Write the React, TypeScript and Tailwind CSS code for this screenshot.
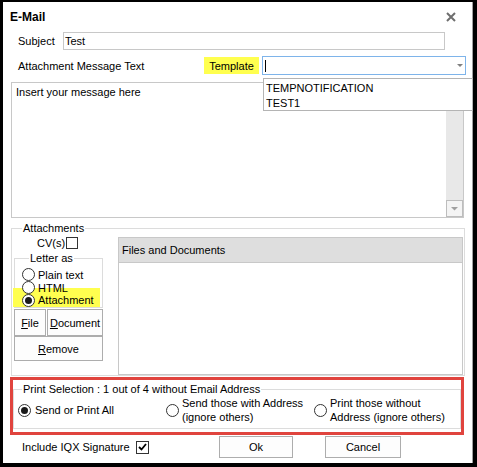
import React from "react";

function Radio({ checked }: { checked?: boolean }) {
  return (
    <span className="w-[13px] h-[13px] rounded-full border border-[#333333] bg-white flex items-center justify-center shrink-0">
      {checked && <span className="w-[7px] h-[7px] rounded-full bg-[#1a1a1a]" />}
    </span>
  );
}

function Btn({ className, children }: { className: string; children: React.ReactNode }) {
  return (
    <div
      className={
        "flex items-center justify-center border border-[#adadad] bg-[#fdfdfd] " + className
      }
    >
      {children}
    </div>
  );
}

export default function App() {
  return (
    <div className="w-[477px] h-[467px] bg-black pt-[2px] pl-[3px] font-['Liberation_Sans',Arial,sans-serif] text-[11px] leading-[14px] text-black">
      <div className="w-[470px] h-[461px] bg-white border-r border-[#a0a0a0] flex flex-col">
        {/* title bar */}
        <div className="h-[28px] pt-[2px] pl-[7px] pr-[16px] flex items-center justify-between">
          <span className="text-[12px] font-bold">E-Mail</span>
          <svg width="10" height="10" viewBox="0 0 10 10">
            <path d="M1 1L9 9M9 1L1 9" stroke="#6e6e6e" strokeWidth="2" />
          </svg>
        </div>

        {/* subject */}
        <div className="mt-[2px] h-[18px] pl-[15px] flex items-center">
          <span className="w-[45px]">Subject</span>
          <div className="w-[382px] h-[18px] border border-[#c8c8c8] pl-[1px] flex items-center">
            Test
          </div>
        </div>

        {/* attachment message / template */}
        <div className="mt-[6px] h-[19px] pl-[15px] flex items-center">
          <span className="w-[186px]">Attachment Message Text</span>
          <span className="w-[55px] h-[17px] bg-[#ffff4f] flex items-center justify-center">
            Template
          </span>
          <div className="relative ml-[3px] w-[204px] h-[19px] border border-[#7eb4ea] flex items-center justify-between pl-[2px] pr-[2px]">
            <span className="w-[1px] h-[12px] bg-black" />
            <svg width="6" height="4" viewBox="0 0 6 4">
              <path d="M0 0H6L3 3Z" fill="#808080" />
            </svg>
            <div className="absolute z-10 top-[21px] left-[0px] w-[210px] h-[33px] border border-[#b4b4b4] bg-white pt-[1px] pl-[2px]">
              <div className="h-[16px] flex items-center">TEMPNOTIFICATION</div>
              <div className="h-[14px] flex items-center">TEST1</div>
            </div>
          </div>
        </div>

        {/* message */}
        <div className="mt-[7px] ml-[8px] w-[453px] h-[136px] border border-[#c8c8c8] flex">
          <div className="flex-1 pl-[4px] pt-[2px]">Insert your message here</div>
          <div className="w-[17px] bg-[#e8e8e8] flex flex-col justify-end">
            <div className="h-[17px] border border-[#bdbdbd] bg-[#f4f4f4] flex items-center justify-center">
              <svg width="7" height="4" viewBox="0 0 7 4">
                <path d="M0 0H7L3.5 3.5Z" fill="#a0a0a0" />
              </svg>
            </div>
          </div>
        </div>

        {/* attachments group */}
        <div className="relative mt-[10px] ml-[8px] w-[454px] h-[148px] border border-[#dcdcdc] flex">
          <span className="absolute -top-[8px] left-[10px] bg-white px-[1px]">Attachments</span>

          <div className="w-[104px] pl-[2px] flex flex-col">
            <div className="mt-[8px] h-[12px] pl-[23px] flex items-center">
              <span>CV(s)</span>
              <span className="ml-[1px] w-[12px] h-[12px] border border-[#333333] bg-white" />
            </div>

            <div className="relative mt-[9px] w-[89px] h-[50px] border border-[#dcdcdc] pt-[9px]">
              <span className="absolute -top-[8px] left-[14px] bg-white px-[1px]">Letter as</span>
              <div className="h-[13px] pl-[7px] flex items-center gap-[3px]">
                <Radio />
                <span>Plain text</span>
              </div>
              <div className="relative z-[1] h-[13px] pl-[7px] flex items-center gap-[3px]">
                <Radio />
                <span>HTML</span>
              </div>
              <div className="relative -mt-[6px] -ml-[2px] w-[87px] h-[19px] bg-[#ffff4f] pt-[6px] pl-[9px] flex items-start gap-[3px]">
                <Radio checked />
                <span className="leading-[13px]">Attachment</span>
              </div>
            </div>

            <div className="mt-[1px] flex">
              <Btn className="w-[32px] h-[27px]">
                <span>
                  <span className="underline">F</span>ile
                </span>
              </Btn>
              <Btn className="ml-[1px] w-[56px] h-[27px]">
                <span>
                  <span className="underline">D</span>ocument
                </span>
              </Btn>
            </div>
            <Btn className="mt-[0px] w-[89px] h-[25px]">
              <span>
                <span className="underline">R</span>emove
              </span>
            </Btn>
          </div>

          <div className="ml-[2px] mt-[8px] w-[345px] h-[138px] border border-[#c8c8c8] flex flex-col">
            <div className="h-[25px] bg-[#dedede] border-b border-[#c8c8c8] pl-[3px] flex items-center">
              Files and Documents
            </div>
          </div>
        </div>

        {/* print selection */}
        <div className="mt-[1px] ml-[7px] w-[454px] h-[58px] border-[3px] border-[#e0443e]">
          <div className="relative mt-[9px] h-[40px] border border-[#dcdcdc] pt-[6px] pl-[4px] flex">
            <span className="absolute -top-[8px] left-[8px] bg-white px-[1px]">
              Print Selection : 1 out of 4 without Email Address
            </span>
            <div className="w-[148px] h-[28px] flex items-center gap-[4px]">
              <Radio checked />
              <span>Send or Print All</span>
            </div>
            <div className="w-[148px] h-[28px] flex items-center gap-[3px]">
              <Radio />
              <span>
                Send those with Address
                <br />
                (ignore others)
              </span>
            </div>
            <div className="w-[140px] h-[28px] flex items-center gap-[3px]">
              <Radio />
              <span>
                Print those without
                <br />
                Address (ignore others)
              </span>
            </div>
          </div>
        </div>

        {/* footer */}
        <div className="mt-[1px] h-[22px] pl-[19px] flex items-center">
          <span className="w-[114px]">Include IQX Signature</span>
          <span className="w-[13px] h-[13px] border border-[#333333] bg-white flex items-center justify-center">
            <svg width="9" height="8" viewBox="0 0 9 8">
              <path d="M1 4L3.5 6.5L8 1" stroke="#000" strokeWidth="1.8" fill="none" />
            </svg>
          </span>
          <Btn className="ml-[70px] w-[74px] h-[22px]">Ok</Btn>
          <Btn className="ml-[32px] w-[76px] h-[22px]">Cancel</Btn>
        </div>
      </div>
    </div>
  );
}
